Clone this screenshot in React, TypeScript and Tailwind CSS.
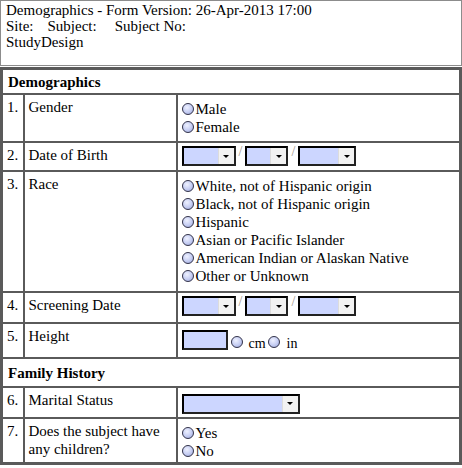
import React from 'react';

const font = { fontFamily: '"Liberation Serif", "Times New Roman", serif' };

const Radio = () => (
  <span className="inline-block w-[12px] h-[12px] rounded-full border border-[#34344a] bg-[radial-gradient(circle_at_40%_35%,#eef1ff_0%,#c4ccf2_55%,#8f9bd0_100%)] shrink-0" />
);

const Select = ({ w }: { w: number }) => (
  <span
    className="inline-flex h-[20px] border-2 border-t-black border-l-black border-r-[#222] border-b-[#222] bg-[#ccd6ff] justify-end"
    style={{ width: w }}
  >
    <span className="w-[16px] h-full bg-[#f2f2f2] border-l border-[#dcdcdc] flex items-center justify-center">
      <span className="w-0 h-0 border-l-[3px] border-r-[3px] border-t-[3px] border-l-transparent border-r-transparent border-t-black" />
    </span>
  </span>
);

const Slash = () => (
  <span className="text-[#a0968a] text-[14px] leading-[12px] mx-[3px]">/</span>
);

const DateSelects = () => (
  <div className="flex items-start pt-[3px]">
    <Select w={54} />
    <Slash />
    <Select w={43} />
    <Slash />
    <Select w={58} />
  </div>
);

const Options = ({ items }: { items: string[] }) => (
  <div className="pt-[5px]">
    {items.map(t => (
      <div key={t} className="flex items-center h-[18px]">
        <Radio />
        <span className="ml-[2px]">{t}</span>
      </div>
    ))}
  </div>
);

type Row = { n: string; label: React.ReactNode; h: number; value: React.ReactNode };

const cell = 'border-2 border-[#5a5a5a] p-0 align-top';

export default function App() {
  const rows: (Row | { section: string; h: number })[] = [
    { section: 'Demographics', h: 23 },
    { n: '1.', label: 'Gender', h: 46, value: <Options items={['Male', 'Female']} /> },
    { n: '2.', label: 'Date of Birth', h: 27, value: <DateSelects /> },
    {
      n: '3.',
      label: 'Race',
      h: 119,
      value: (
        <Options
          items={[
            'White, not of Hispanic origin',
            'Black, not of Hispanic origin',
            'Hispanic',
            'Asian or Pacific Islander',
            'American Indian or Alaskan Native',
            'Other or Unknown',
          ]}
        />
      ),
    },
    { n: '4.', label: 'Screening Date', h: 29, value: <DateSelects /> },
    {
      n: '5.',
      label: 'Height',
      h: 33,
      value: (
        <div className="flex items-end pt-[6px]">
          <span className="inline-block w-[46px] h-[20px] border-2 border-t-black border-l-black border-r-[#222] border-b-[#222] bg-[#ccd6ff]" />
          <span className="ml-[3px] mb-[2px] flex items-center"><Radio /></span>
          <span className="text-[14px] leading-[16px] ml-[6px] -mb-[2px]">cm</span>
          <span className="ml-[2px] mb-[2px] flex items-center"><Radio /></span>
          <span className="text-[14px] leading-[16px] ml-[7px] -mb-[2px]">in</span>
        </div>
      ),
    },
    { section: 'Family History', h: 27 },
    { n: '6.', label: 'Marital Status', h: 29, value: <div className="pt-[3px]"><Select w={118} /></div> },
    {
      n: '7.',
      label: 'Does the subject have any children?',
      h: 43,
      value: <Options items={['Yes', 'No']} />,
    },
  ];

  return (
    <div className="w-[462px] h-[468px] bg-white text-black text-[15px] leading-[18px]" style={font}>
      <div className="h-[66px] border border-[#8c8c8c] px-[5px] pt-[1px] leading-[16px]">
        <div>Demographics - Form Version: 26-Apr-2013 17:00</div>
        <div className="flex">
          <span>Site:</span>
          <span className="ml-[14px]">Subject:</span>
          <span className="ml-[18px]">Subject No:</span>
        </div>
        <div>StudyDesign</div>
      </div>
      <table className="mt-[1px] w-[462px] table-fixed border-collapse border-[3px] border-[#5a5a5a]">
        <colgroup>
          <col className="w-[22px]" />
          <col className="w-[153px]" />
          <col />
        </colgroup>
        <tbody>
          {rows.map((r, i) =>
            'section' in r ? (
              <tr key={i}>
                <td colSpan={3} className={cell}>
                  <div className="px-[5px] font-bold flex items-center" style={{ height: r.h }}>
                    {r.section}
                  </div>
                </td>
              </tr>
            ) : (
              <tr key={i}>
                <td className={cell}>
                  <div className="pl-[4px] pt-[3px]" style={{ height: r.h }}>{r.n}</div>
                </td>
                <td className={cell}>
                  <div className="px-[4px] pt-[3px]" style={{ height: r.h }}>{r.label}</div>
                </td>
                <td className={cell}>
                  <div className="px-[4px]" style={{ height: r.h }}>{r.value}</div>
                </td>
              </tr>
            )
          )}
        </tbody>
      </table>
    </div>
  );
}
